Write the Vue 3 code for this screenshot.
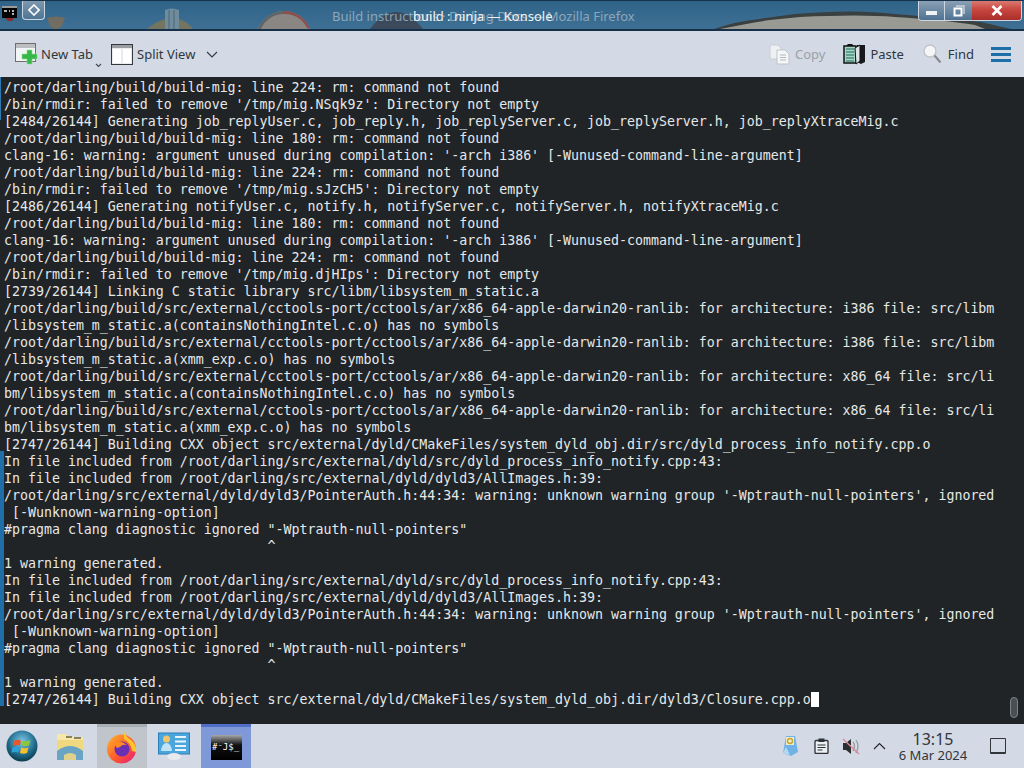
<script setup>
const lines = [
  "/root/darling/build/build-mig: line 224: rm: command not found",
  "/bin/rmdir: failed to remove '/tmp/mig.NSqk9z': Directory not empty",
  "[2484/26144] Generating job_replyUser.c, job_reply.h, job_replyServer.c, job_replyServer.h, job_replyXtraceMig.c",
  "/root/darling/build/build-mig: line 180: rm: command not found",
  "clang-16: warning: argument unused during compilation: '-arch i386' [-Wunused-command-line-argument]",
  "/root/darling/build/build-mig: line 224: rm: command not found",
  "/bin/rmdir: failed to remove '/tmp/mig.sJzCH5': Directory not empty",
  "[2486/26144] Generating notifyUser.c, notify.h, notifyServer.c, notifyServer.h, notifyXtraceMig.c",
  "/root/darling/build/build-mig: line 180: rm: command not found",
  "clang-16: warning: argument unused during compilation: '-arch i386' [-Wunused-command-line-argument]",
  "/root/darling/build/build-mig: line 224: rm: command not found",
  "/bin/rmdir: failed to remove '/tmp/mig.djHIps': Directory not empty",
  "[2739/26144] Linking C static library src/libm/libsystem_m_static.a",
  "/root/darling/build/src/external/cctools-port/cctools/ar/x86_64-apple-darwin20-ranlib: for architecture: i386 file: src/libm",
  "/libsystem_m_static.a(containsNothingIntel.c.o) has no symbols",
  "/root/darling/build/src/external/cctools-port/cctools/ar/x86_64-apple-darwin20-ranlib: for architecture: i386 file: src/libm",
  "/libsystem_m_static.a(xmm_exp.c.o) has no symbols",
  "/root/darling/build/src/external/cctools-port/cctools/ar/x86_64-apple-darwin20-ranlib: for architecture: x86_64 file: src/li",
  "bm/libsystem_m_static.a(containsNothingIntel.c.o) has no symbols",
  "/root/darling/build/src/external/cctools-port/cctools/ar/x86_64-apple-darwin20-ranlib: for architecture: x86_64 file: src/li",
  "bm/libsystem_m_static.a(xmm_exp.c.o) has no symbols",
  "[2747/26144] Building CXX object src/external/dyld/CMakeFiles/system_dyld_obj.dir/src/dyld_process_info_notify.cpp.o",
  "In file included from /root/darling/src/external/dyld/src/dyld_process_info_notify.cpp:43:",
  "In file included from /root/darling/src/external/dyld/dyld3/AllImages.h:39:",
  "/root/darling/src/external/dyld/dyld3/PointerAuth.h:44:34: warning: unknown warning group '-Wptrauth-null-pointers', ignored",
  " [-Wunknown-warning-option]",
  "#pragma clang diagnostic ignored \"-Wptrauth-null-pointers\"",
  "                                 ^",
  "1 warning generated.",
  "In file included from /root/darling/src/external/dyld/src/dyld_process_info_notify.cpp:43:",
  "In file included from /root/darling/src/external/dyld/dyld3/AllImages.h:39:",
  "/root/darling/src/external/dyld/dyld3/PointerAuth.h:44:34: warning: unknown warning group '-Wptrauth-null-pointers', ignored",
  " [-Wunknown-warning-option]",
  "#pragma clang diagnostic ignored \"-Wptrauth-null-pointers\"",
  "                                 ^",
  "1 warning generated.",
  "[2747/26144] Building CXX object src/external/dyld/CMakeFiles/system_dyld_obj.dir/dyld3/Closure.cpp.o",
]
</script>

<template>
  <div class="screen">
    <header class="titlebar">
      <svg class="wallpaper" width="1024" height="28" viewBox="0 0 1024 28">
        <path d="M47 17q9-3 18 0l-3 8q-2 3-6 3t-6-3z" fill="#7f6d55" opacity=".8"/>
        <path d="M147 28q10-8 18-10l2-2h10l2 2q8 2 14 10z" fill="#87774f" opacity=".75"/>
        <path d="M165 9q7-3 14 0v19h-14z" fill="#6f8c9c"/>
        <path d="M169 9v19M174 9v19" stroke="#4a6576" stroke-width="1"/>
        <circle cx="284" cy="38" r="28" fill="#8a8683"/>
        <path d="M258 28a28 28 0 0 1 26-18v3a24 24 0 0 0-23 15z" fill="#5f6468"/>
        <path d="M284 10a28 28 0 0 1 26 18l-3-1a24 24 0 0 0-23-14z" fill="#8c4f4c"/>
        <path d="M370 28q26-34 53 0z" fill="#3a3c46" opacity=".7"/>
        <path d="M714 28q24-8 45-10l36-5q60-5 100 0q50 4 86 8l30 7z" fill="#3a3f3f"/>
        <path d="M720 28q30-6 50-9l30-3q60-3 95 0q50 3 80 8l10 4z" fill="#9a9a94"/>
      </svg>

      <div class="title-left">
        <svg class="app-icon" width="15" height="16" viewBox="0 0 15 16">
          <rect x="0" y="1" width="15" height="3" fill="#9a9a9a"/>
          <rect x="0" y="3" width="15" height="10" fill="#050505"/>
          <path d="M2 6h3M7 6h1M10 6h2M10 9h2" stroke="#eee" stroke-width="1.5"/>
          <path d="M3 13h9l-2 3H6z" fill="#8d2c2c"/>
        </svg>
        <div class="pin-button">
          <svg width="12" height="12" viewBox="0 0 12 12"><path d="M6 1l5 5-5 5-5-5z" fill="none" stroke="#fff" stroke-width="1.6"/></svg>
        </div>
      </div>

      <div class="titles">
        <span class="title-ghost">Build instructions · Darling Docs — Mozilla Firefox</span>
        <span class="title-main">build : ninja — Konsole</span>
      </div>

      <div class="win-buttons">
        <div class="win-btn minimize"><span class="min-bar"></span></div>
        <div class="win-btn restore">
          <svg width="12" height="12" viewBox="0 0 12 12"><path d="M3 1h8v8" fill="none" stroke="#c7d3dc" stroke-width="1.4"/><rect x="1.5" y="3.5" width="7" height="7" fill="none" stroke="#fff" stroke-width="2"/></svg>
        </div>
        <div class="win-btn close">
          <svg width="12" height="11" viewBox="0 0 12 11"><path d="M1.5 1l9 9M10.5 1l-9 9" stroke="#fff" stroke-width="2.6"/></svg>
        </div>
      </div>
    </header>

    <nav class="toolbar">
      <button class="tool new-tab">
        <svg width="24" height="23" viewBox="0 0 24 23">
          <rect x="0.5" y="0.5" width="20" height="18" fill="#f3f4f6" stroke="#6f6f72"/>
          <rect x="1" y="1" width="19" height="4" fill="#bcbec2"/>
          <path d="M12 7h5v4h5v5h-5v5h-5v-5H7v-5h5z" fill="#35b74a" stroke="#8fe08f" stroke-width=".6"/>
        </svg>
        <span>New Tab</span>
        <svg class="mini-caret" width="7" height="5" viewBox="0 0 7 5"><path d="M1 1l2.500 2.500L6 1" fill="none" stroke="#4a4f55" stroke-width="1.200"/></svg>
      </button>
      <button class="tool split">
        <svg width="22" height="21" viewBox="0 0 22 21">
          <rect x="0.5" y="0.5" width="21" height="20" fill="#e8eaee" stroke="#34373b"/>
          <rect x="1" y="1" width="20" height="3" fill="#9a9da2"/>
          <rect x="2" y="5" width="8" height="14" fill="#fff"/>
          <rect x="12" y="5" width="8" height="14" fill="#fff"/>
        </svg>
        <span>Split View</span>
        <svg class="caret" width="12" height="7" viewBox="0 0 12 7"><path d="M1 1l5 5 5-5" fill="none" stroke="#33383d" stroke-width="1.100"/></svg>
      </button>
      <div class="spacer"></div>
      <button class="tool copy">
        <svg width="21" height="21" viewBox="0 0 21 21">
          <path d="M1 1h8l3 3v11H1z" fill="#eef0f3" stroke="#c8ccd2"/>
          <path d="M8 6h8l4 4v10H8z" fill="#f5f6f8" stroke="#bfc3c9"/>
          <path d="M11 11h6M11 13.500h6M11 16h6" stroke="#b4b8be"/>
        </svg>
        <span>Copy</span>
      </button>
      <button class="tool paste">
        <svg width="23" height="21" viewBox="0 0 23 21">
          <rect x="1" y="2" width="12" height="17" fill="#a5d6c4" stroke="#111" stroke-width="1.500"/>
          <path d="M3 5h8M3 8h8M3 11h8M3 14h8M3 17h8" stroke="#1c6b58"/>
          <path d="M14 1h8v17l-4 2-4-2z" fill="#17191c"/>
          <path d="M12 4l5-3v16l-4 3z" fill="#dfe3e8" stroke="#111"/>
          <path d="M3 2l2-2h4l2 2z" fill="#111"/>
        </svg>
        <span>Paste</span>
      </button>
      <button class="tool find">
        <svg width="20" height="22" viewBox="0 0 20 22">
          <circle cx="8" cy="8" r="6" fill="#f5f6f7" stroke="#c3c6c8" stroke-width="1.500"/>
          <path d="M12.500 12.500l6 7" stroke="#85898c" stroke-width="2"/>
        </svg>
        <span>Find</span>
      </button>
      <div class="menu-btn"><span></span><span></span><span></span></div>
    </nav>

    <main class="terminal">
      <div class="marks">
        <span class="mark-thin"></span>
        <span class="mark-gap"></span>
        <span class="mark-thick"></span>
      </div>
      <pre class="output"><template v-for="(line, i) in lines" :key="i">{{ line }}<span v-if="i === lines.length - 1" class="cursor"></span>{{ "\n" }}</template></pre>
      <div class="scroll-thumb"></div>
    </main>

    <footer class="taskbar">
      <div class="task first">
        <svg width="32" height="32" viewBox="0 0 32 32">
          <defs>
            <radialGradient id="orb" cx=".5" cy=".35" r=".7"><stop offset="0" stop-color="#7cc7ea"/><stop offset=".6" stop-color="#226c8c"/><stop offset="1" stop-color="#07303f"/></radialGradient>
          </defs>
          <circle cx="16" cy="16" r="15.500" fill="url(#orb)"/>
          <path d="M8 11q4-2 7-0.500l-1.200 5q-3-1-7 .5z" fill="#e8562a"/>
          <path d="M16.500 10.500q4 1.500 8-.5l-1.500 5.500q-4 1.500-7.500-.2z" fill="#8cc63f"/>
          <path d="M6.500 17.500q4-1.500 7 0l-1.200 5q-3-1.200-7 .2z" fill="#2d9fd9"/>
          <path d="M15 17.500q4 1.500 7.500 0L21 23q-3.500 1.500-7 0z" fill="#f5c02c"/>
        </svg>
      </div>
      <div class="task">
        <svg width="28" height="27" viewBox="0 0 28 27">
          <path d="M1 1h9l2 3h15v22H1z" fill="#f0d880"/>
          <path d="M1 1h9l2 3h15v3H1z" fill="#f7e7a8"/>
          <path d="M10 3h6v2h-6zM18 4h7v2h-7z" fill="#8a8458"/>
          <path d="M1 27V18q13-10 26 0v9z" fill="#6aa4c4"/>
          <path d="M8 27v-5q6-4 12 0v5z" fill="#dfd08a"/>
        </svg>
      </div>
      <div class="task firefox">
        <svg width="32" height="33" viewBox="0 0 32 33">
          <defs>
            <linearGradient id="fx" x1="0" y1="0" x2="1" y2="1"><stop offset="0" stop-color="#ffb82e"/><stop offset=".55" stop-color="#ff5a2a"/><stop offset="1" stop-color="#e31587"/></linearGradient>
          </defs>
          <circle cx="15.500" cy="18" r="14.500" fill="url(#fx)"/>
          <path d="M18 0q1 6 7 9 6 5 5 12l-4-1q-1-8-8-12z" fill="#ffc42e"/>
          <circle cx="16" cy="18" r="7.500" fill="#6b2fb3"/>
          <path d="M8 13q6-5 13 1-5-1-7 2l-3 1z" fill="#ff8a1f"/>
        </svg>
      </div>
      <div class="task">
        <svg width="32" height="28" viewBox="0 0 32 28">
          <rect x="0.500" y="1" width="31" height="21" fill="#4aa6dc" stroke="#2a7fb8"/>
          <circle cx="8.500" cy="7" r="3.500" fill="#f2c46d"/>
          <path d="M3 19q1-8 5.500-8T14 19z" fill="#bfe3f6"/>
          <path d="M17 5h11M17 9.500h11M17 14h11M17 18h11" stroke="#e8f5fc" stroke-width="2"/>
          <ellipse cx="16" cy="24.500" rx="7" ry="3.500" fill="#e8eaee"/>
        </svg>
      </div>
      <div class="task active">
        <svg width="31" height="25" viewBox="0 0 31 25">
          <defs>
            <linearGradient id="term" x1="0" y1="0" x2="0" y2="1"><stop offset="0" stop-color="#a8a8a8"/><stop offset=".4" stop-color="#111"/><stop offset="1" stop-color="#000"/></linearGradient>
          </defs>
          <rect width="31" height="25" fill="url(#term)"/>
          <text x="1" y="15" class="term-glyph">#⁻J$_</text>
        </svg>
      </div>
      <div class="spacer"></div>
      <div class="tray">
        <svg class="tray-first" width="17" height="22" viewBox="0 0 17 22">
          <path d="M4 1h9l3 16-7 4-8-3z" fill="#6fb3e6"/>
          <path d="M4 2h8v8H4z" fill="#f2efcf"/>
          <circle cx="8" cy="6" r="2.500" fill="none" stroke="#c9a227" stroke-width="1.400"/>
          <path d="M1 18l3-6 4 8z" fill="#b9d8ef"/>
        </svg>
        <svg width="15" height="16" viewBox="0 0 15 16">
          <rect x="1" y="2.500" width="13" height="13" rx="1" fill="#eceff3" stroke="#2d3034" stroke-width="1.300"/>
          <rect x="4.500" y="0.500" width="6" height="3.500" fill="#2d3034"/>
          <path d="M3.500 7h8M3.500 9.500h8M3.500 12h5" stroke="#2d3034" stroke-width="1.100"/>
        </svg>
        <svg width="18" height="17" viewBox="0 0 18 17">
          <path d="M1 5h3l5-4v15l-5-4H1z" fill="#2b2d30"/>
          <path d="M11 4q3 4 0 9M14 2q4 6 0 13" fill="none" stroke="#9a9ca0" stroke-width="1.300"/>
          <path d="M1 1l16 15" stroke="#d98a9a" stroke-width="1.400"/>
        </svg>
        <svg width="13" height="8" viewBox="0 0 13 8"><path d="M1 7l5.500-5.500L12 7" fill="none" stroke="#24282c" stroke-width="1.200"/></svg>
      </div>
      <div class="clock">
        <div class="time">13:15</div>
        <div class="date">6 Mar 2024</div>
      </div>
      <div class="show-desktop"></div>
    </footer>
  </div>
</template>

<style scoped>
.screen {
  width: 1024px;
  height: 768px;
  display: flex;
  flex-direction: column;
  overflow: hidden;
  font-family: "Noto Sans", sans-serif;
  background: #d3dae5;
}
.titlebar {
  position: relative;
  flex: 0 0 31px;
  box-sizing: border-box;
  display: flex;
  align-items: flex-start;
  justify-content: space-between;
  border-top: 1px solid #16324a;
  border-bottom: 2px solid #17304a;
  background: linear-gradient(#2e6388, #3f7094);
}
.wallpaper {
  position: absolute;
  left: 0;
  top: 0;
}
.title-left {
  position: relative;
  display: flex;
  align-items: flex-start;
  gap: 5px;
  padding-left: 2px;
}
.app-icon {
  margin-top: 4px;
}
.pin-button {
  width: 23px;
  height: 19px;
  box-sizing: border-box;
  display: flex;
  align-items: center;
  justify-content: center;
  border: 1px solid #cbd6e0;
  border-top: none;
  border-radius: 0 0 4px 4px;
  background: linear-gradient(#7f98ae, #4d7595);
}
.titles {
  position: absolute;
  left: 0;
  right: 0;
  top: 6px;
  height: 18px;
  font-size: 13px;
  line-height: 18px;
  white-space: nowrap;
}
.title-ghost {
  position: absolute;
  left: 332px;
  color: #a9bccb;
  opacity: .75;
}
.title-main {
  position: absolute;
  left: 413px;
  color: #eef2f5;
}
.win-buttons {
  position: relative;
  display: flex;
  margin-right: 2px;
  height: 19px;
  border: 1px solid #cbd6e0;
  border-top: none;
  border-radius: 0 0 4px 4px;
  overflow: hidden;
}
.win-btn {
  display: flex;
  align-items: center;
  justify-content: center;
  box-sizing: border-box;
}
.minimize {
  width: 26px;
  background: linear-gradient(#8aa0b4, #4f7291);
  border-right: 1px solid #cbd6e0;
}
.min-bar {
  width: 11px;
  height: 4px;
  margin-top: 5px;
  background: #eef2f5;
}
.restore {
  width: 27px;
  background: linear-gradient(#8aa0b4, #4f7291);
}
.close {
  width: 49px;
  background: linear-gradient(#d97a72 0, #c8473f 45%, #a92f2a 100%);
}
.toolbar {
  flex: 0 0 46px;
  display: flex;
  align-items: center;
  padding: 0 13px 0 15px;
  background: #d3dae5;
  font-size: 13px;
  color: #31363b;
}
.tool {
  position: relative;
  display: flex;
  align-items: center;
  padding: 0;
  border: none;
  background: none;
  font: inherit;
  color: inherit;
}
.new-tab {
  gap: 2px;
  margin-right: 18px;
}
.mini-caret {
  position: absolute;
  right: -9px;
  top: 20px;
}
.split {
  gap: 4px;
}
.caret {
  margin-left: 7px;
}
.spacer {
  flex: 1;
}
.copy {
  gap: 5px;
  color: #9aa1a9;
  margin-right: 18px;
}
.paste {
  gap: 4px;
  margin-right: 18px;
}
.find {
  gap: 6px;
  margin-right: 17px;
}
.menu-btn {
  width: 20px;
  display: flex;
  flex-direction: column;
  gap: 3px;
}
.menu-btn span {
  height: 3px;
  background: #1d6fa8;
}
.terminal {
  position: relative;
  flex: 0 0 647px;
  background: #202426;
  overflow: hidden;
}
.marks {
  position: absolute;
  left: 0;
  top: 0;
  display: flex;
  flex-direction: column;
  align-items: flex-start;
}
.mark-thin {
  width: 1px;
  height: 43px;
  background: #2d7ab0;
}
.mark-gap {
  height: 331px;
}
.mark-thick {
  width: 4px;
  height: 255px;
  background: #1f6ea8;
}
.output {
  margin: 0;
  padding: 2px 0 0 4px;
  font-family: "DejaVu Sans Mono", monospace;
  font-size: 13.280px;
  line-height: 17px;
  color: #e6e8e9;
  white-space: pre;
}
.cursor {
  display: inline-block;
  width: 8px;
  height: 15px;
  vertical-align: -3px;
  background: #fff;
}
.scroll-thumb {
  position: absolute;
  right: 6px;
  top: 620px;
  width: 8px;
  height: 21px;
  box-sizing: border-box;
  border: 1px solid #7c8388;
  border-radius: 4px;
  background: #4a4f52;
}
.taskbar {
  flex: 1;
  display: flex;
  align-items: stretch;
  gap: 2px;
  background: #d3dae5;
}
.task {
  width: 50px;
  display: flex;
  align-items: center;
  justify-content: center;
  box-sizing: border-box;
}
.first {
  width: 43px;
  padding-left: 1px;
}
.firefox {
  background: #c0c4cb;
  border-top: 3px solid #a9adb4;
}
.active {
  background: #7f98d8;
  border-top: 3px solid #4f6fc9;
}
.term-glyph {
  font-family: "DejaVu Sans Mono", monospace;
  font-size: 9px;
  fill: #fff;
}
.tray {
  display: flex;
  align-items: center;
  gap: 13px;
  color: #24282c;
}
.tray-first {
  margin-right: 2px;
}
.clock {
  width: 90px;
  display: flex;
  flex-direction: column;
  align-items: center;
  justify-content: center;
  color: #31363b;
}
.time {
  font-size: 16px;
  line-height: 17px;
}
.date {
  font-size: 13px;
  line-height: 14px;
}
.show-desktop {
  align-self: center;
  width: 16px;
  height: 16px;
  margin: 0 18px 0 10px;
  box-sizing: border-box;
  border: 1px solid #31363b;
  border-bottom-width: 2px;
  border-radius: 1px;
}
</style>
